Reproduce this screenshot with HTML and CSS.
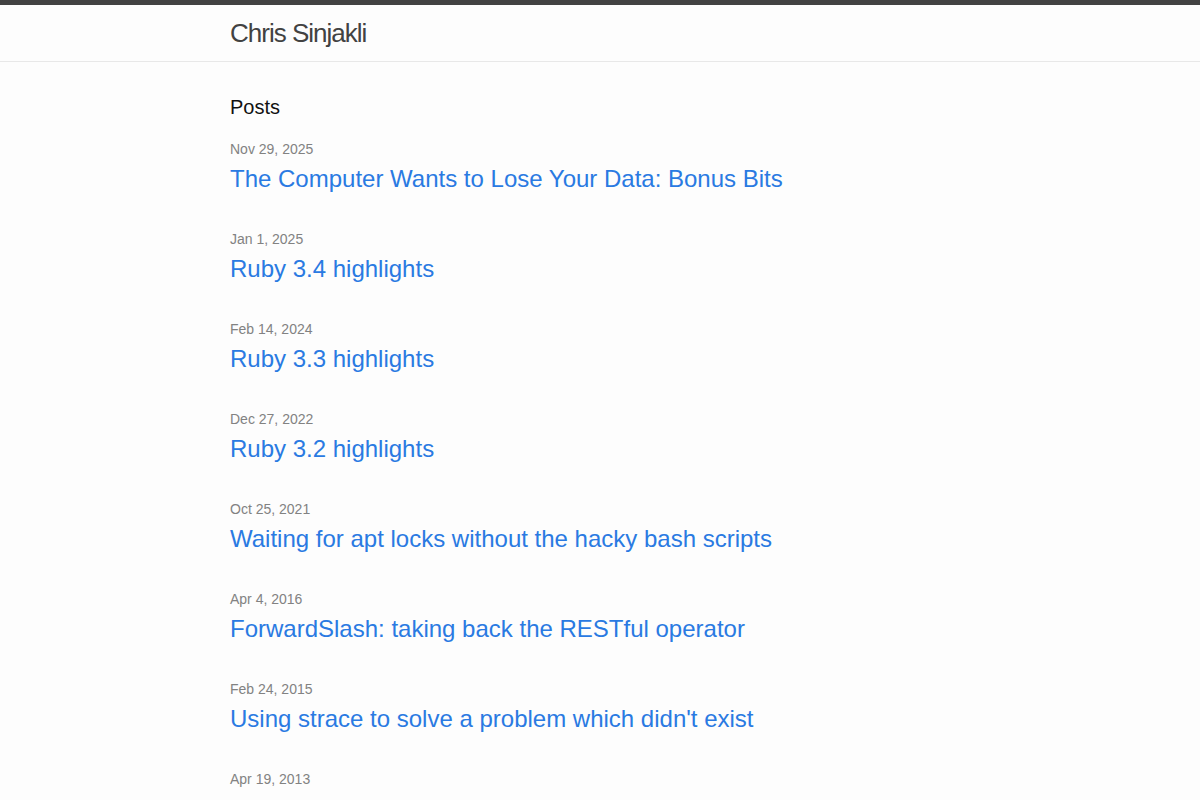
FILE: index.html
```html
<!DOCTYPE html>
<html lang="en">
<head>
<meta charset="utf-8">
<title>Chris Sinjakli</title>
<link rel="stylesheet" href="styles.css">
</head>
<body>
<header class="site-header">
  <div class="wrapper">
    <a class="site-title" href="#">Chris Sinjakli</a>
  </div>
</header>
<main class="page-content">
  <div class="wrapper">
    <h2 class="post-list-heading">Posts</h2>
    <ul class="post-list">
      <li><span class="post-meta">Nov 29, 2025</span><h3><a class="post-link" href="#">The Computer Wants to Lose Your Data: Bonus Bits</a></h3></li>
      <li><span class="post-meta">Jan 1, 2025</span><h3><a class="post-link" href="#">Ruby 3.4 highlights</a></h3></li>
      <li><span class="post-meta">Feb 14, 2024</span><h3><a class="post-link" href="#">Ruby 3.3 highlights</a></h3></li>
      <li><span class="post-meta">Dec 27, 2022</span><h3><a class="post-link" href="#">Ruby 3.2 highlights</a></h3></li>
      <li><span class="post-meta">Oct 25, 2021</span><h3><a class="post-link" href="#">Waiting for apt locks without the hacky bash scripts</a></h3></li>
      <li><span class="post-meta">Apr 4, 2016</span><h3><a class="post-link" href="#">ForwardSlash: taking back the RESTful operator</a></h3></li>
      <li><span class="post-meta">Feb 24, 2015</span><h3><a class="post-link" href="#">Using strace to solve a problem which didn't exist</a></h3></li>
      <li><span class="post-meta">Apr 19, 2013</span></li>
    </ul>
  </div>
</main>
</body>
</html>
```
FILE: styles.css
```css
html, body {
  margin: 0;
  padding: 0;
}
body {
  font: 400 16px/1.5 "Liberation Sans", Arial, sans-serif;
  color: #111111;
  background-color: #fdfdfd;
}
.wrapper {
  max-width: 740px;
  margin: 0 auto;
  padding: 0 30px;
}
.site-header {
  border-top: 5px solid #424242;
  border-bottom: 1px solid #e8e8e8;
}
.site-title {
  display: block;
  font-size: 26px;
  font-weight: 300;
  line-height: 56px;
  letter-spacing: -1px;
  color: #424242;
  text-decoration: none;
}
.page-content {
  padding: 30px 0;
}
.post-list-heading {
  font-size: 20px;
  font-weight: 400;
  line-height: 30px;
  margin: 0 0 15px;
}
.post-list {
  list-style: none;
  margin: 0;
  padding: 0;
}
.post-list li {
  margin-bottom: 30px;
}
.post-meta {
  font-size: 14px;
  color: #828282;
}
.post-list h3 {
  margin: 0;
  font-size: 18px;
  font-weight: 400;
}
.post-link {
  display: block;
  font-size: 24px;
  line-height: 36px;
  color: #2a7ae2;
  text-decoration: none;
}
```
